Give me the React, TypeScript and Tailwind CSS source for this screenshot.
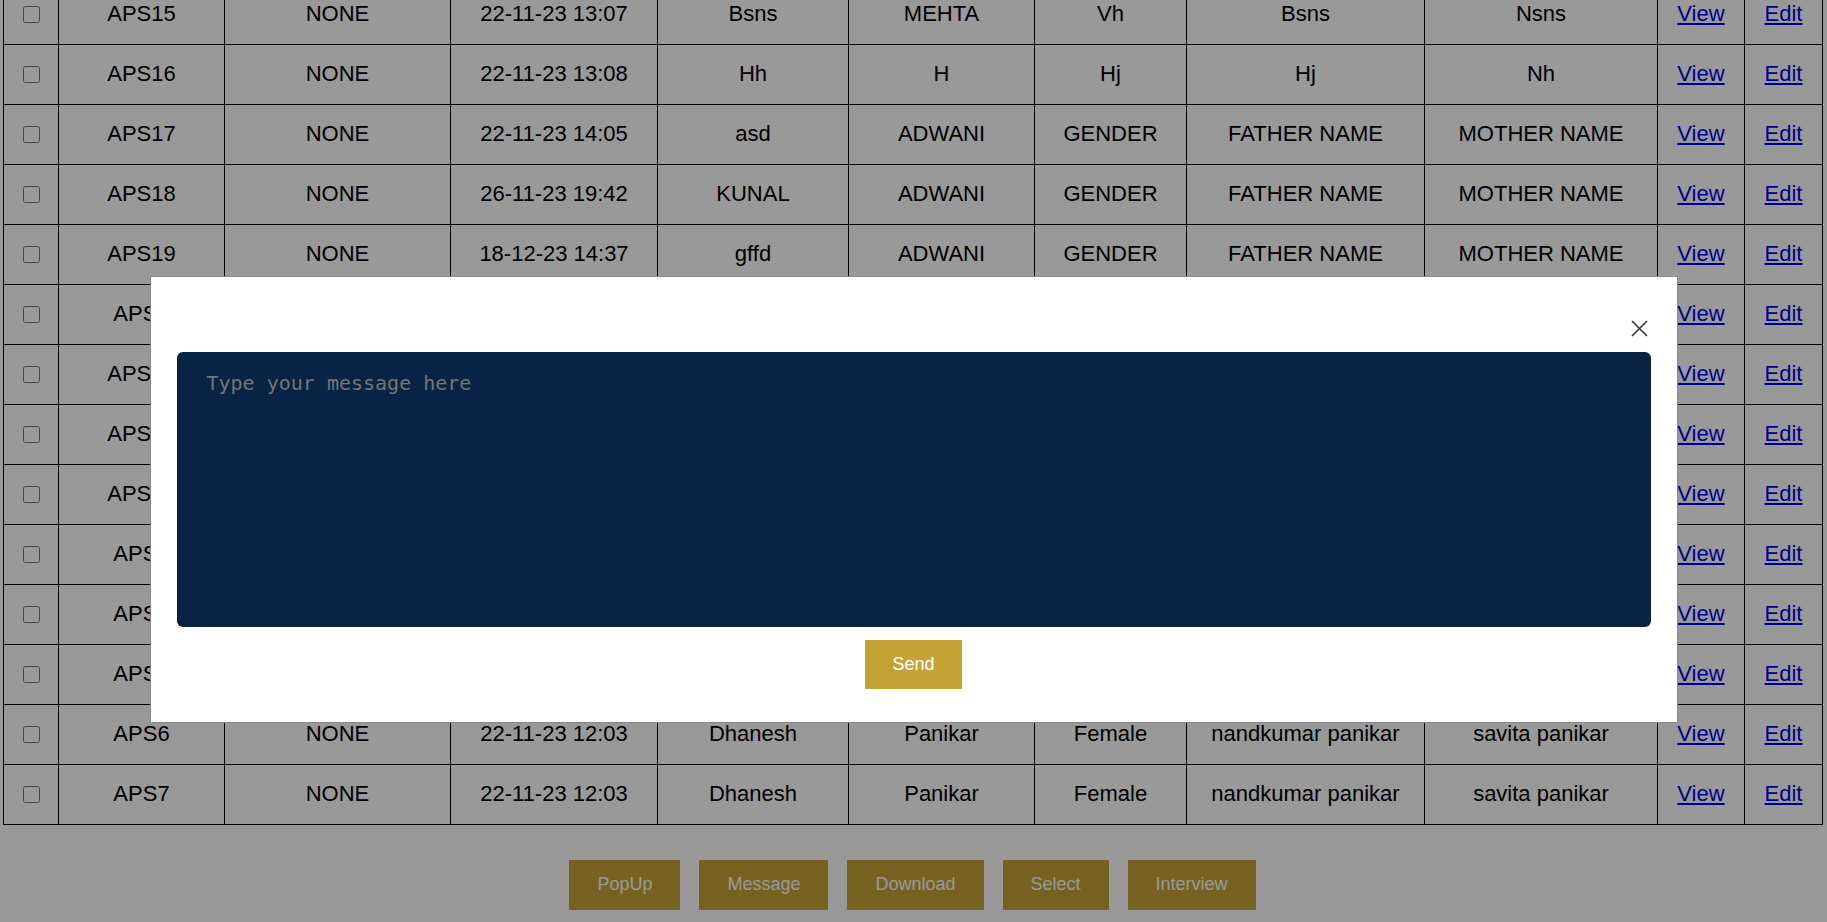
interface Row {
  id: string
  status: string
  date: string
  first: string
  last: string
  gender: string
  father: string
  mother: string
}

const panikar = {
  status: 'NONE',
  date: '22-11-23 12:03',
  first: 'Dhanesh',
  last: 'Panikar',
  gender: 'Female',
  father: 'nandkumar panikar',
  mother: 'savita panikar',
}

const ROWS: Row[] = [
  { id: 'APS15', status: 'NONE', date: '22-11-23 13:07', first: 'Bsns', last: 'MEHTA', gender: 'Vh', father: 'Bsns', mother: 'Nsns' },
  { id: 'APS16', status: 'NONE', date: '22-11-23 13:08', first: 'Hh', last: 'H', gender: 'Hj', father: 'Hj', mother: 'Nh' },
  { id: 'APS17', status: 'NONE', date: '22-11-23 14:05', first: 'asd', last: 'ADWANI', gender: 'GENDER', father: 'FATHER NAME', mother: 'MOTHER NAME' },
  { id: 'APS18', status: 'NONE', date: '26-11-23 19:42', first: 'KUNAL', last: 'ADWANI', gender: 'GENDER', father: 'FATHER NAME', mother: 'MOTHER NAME' },
  { id: 'APS19', status: 'NONE', date: '18-12-23 14:37', first: 'gffd', last: 'ADWANI', gender: 'GENDER', father: 'FATHER NAME', mother: 'MOTHER NAME' },
  { id: 'APS2', ...panikar },
  { id: 'APS20', ...panikar },
  { id: 'APS21', ...panikar },
  { id: 'APS22', ...panikar },
  { id: 'APS3', ...panikar },
  { id: 'APS4', ...panikar },
  { id: 'APS5', ...panikar },
  { id: 'APS6', ...panikar },
  { id: 'APS7', ...panikar },
]

const WIDTHS = [55, 166, 226, 207, 191, 186, 152, 238, 233, 87, 78]

const FIELDS: (keyof Row)[] = ['id', 'status', 'date', 'first', 'last', 'gender', 'father', 'mother']

const ACTIONS = ['PopUp', 'Message', 'Download', 'Select', 'Interview']

function CloseIcon() {
  return (
    <svg width="17" height="17" viewBox="0 0 17 17" fill="none">
      <path d="M1 1L16 16M16 1L1 16" stroke="#333" strokeWidth="1.6" />
    </svg>
  )
}

export default function App() {
  return (
    <div className="relative min-h-[922px] overflow-hidden bg-white font-['Liberation_Sans',Arial,sans-serif] text-black">
      {/* tableau (page défilée) */}
      <div className="-mt-[16px] pl-[3px]">
        <table className="table-fixed border-collapse text-[22px]" style={{ width: 1820 }}>
          <colgroup>
            {WIDTHS.map((w, i) => (
              <col key={i} style={{ width: w }} />
            ))}
          </colgroup>
          <tbody>
            {ROWS.map(r => (
              <tr key={r.id} className="h-[60px]">
                <td className="border border-black p-0 text-center align-middle">
                  <input type="checkbox" className="relative -top-[2px] h-[17px] w-[17px] align-middle" />
                </td>
                {FIELDS.map(f => (
                  <td key={f} className="border border-black p-0 pb-[2px] text-center align-middle">
                    {r[f]}
                  </td>
                ))}
                <td className="border border-black p-0 pb-[2px] text-center align-middle">
                  <a href="#" className="text-[#0000ee] underline">View</a>
                </td>
                <td className="border border-black p-0 pb-[2px] text-center align-middle">
                  <a href="#" className="text-[#0000ee] underline">Edit</a>
                </td>
              </tr>
            ))}
          </tbody>
        </table>
      </div>

      <div className="mt-[35px] flex justify-center gap-[19px] pr-[2px]">
        {ACTIONS.map(a => (
          <button key={a} className="h-[50px] bg-[#c5a236] px-[28px] pb-[2px] text-[18px] text-white">
            {a}
          </button>
        ))}
      </div>

      {/* voile + fenêtre modale */}
      <div className="fixed inset-0 z-10 bg-black/40">
        <div className="mx-auto mt-[276px] w-[1528px] border border-[#888] bg-white px-[26px] pb-[33px] pt-[43px]">
          <div className="flex justify-end pr-[3px]">
            <button className="h-[17px] w-[17px]">
              <CloseIcon />
            </button>
          </div>
          <textarea
            placeholder="Type your message here"
            className="mt-[15px] block h-[275px] w-full resize-none rounded-[6px] bg-[#082344] pl-[30px] pt-[16px] font-['DejaVu_Sans_Mono',monospace] text-[20px] text-white outline-none placeholder:text-[#757575]"
          />
          <div className="mt-[13px] flex justify-center">
            <button className="h-[49px] w-[97px] bg-[#c5a236] text-[18px] text-white">Send</button>
          </div>
        </div>
      </div>
    </div>
  )
}
